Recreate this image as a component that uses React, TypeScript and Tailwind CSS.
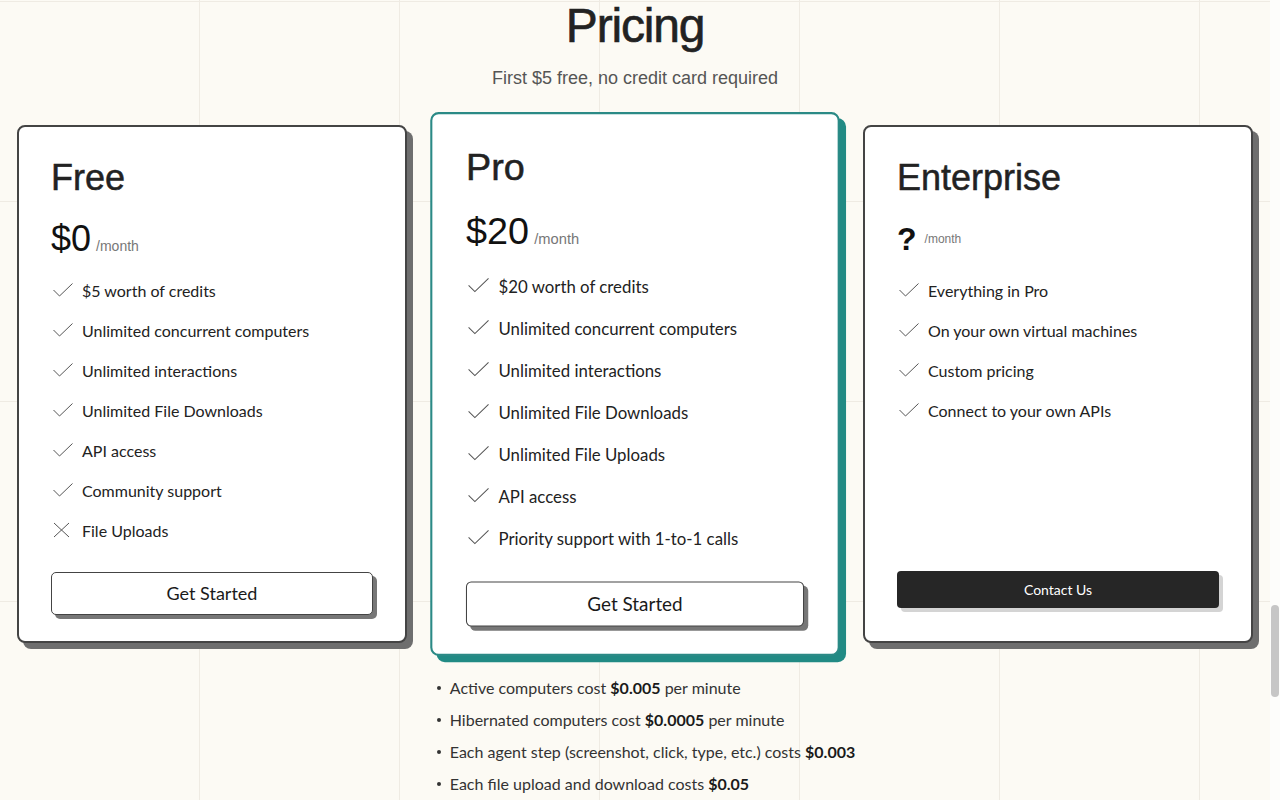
import React from "react";

const HEAD = "font-['Liberation_Sans',Arial,sans-serif]";
const BODY = "font-['Lato','Open_Sans',sans-serif]";

function Check() {
  return (
    <svg width="20" height="14" viewBox="0 0 20 14" className="ml-[2px] mt-[4px] flex-none">
      <polyline points="0.5,7 6.5,13 19.5,0.5" fill="none" stroke="#555" strokeWidth="1" />
    </svg>
  );
}

function Cross() {
  return (
    <svg width="20" height="16" viewBox="0 0 20 16" className="ml-[2px] mt-[3px] flex-none">
      <line x1="1" y1="1" x2="16" y2="15" stroke="#555" strokeWidth="1" />
      <line x1="16" y1="1" x2="1" y2="15" stroke="#555" strokeWidth="1" />
    </svg>
  );
}

type Feature = { text: string; ok: boolean };

function FeatureList({ items }: { items: Feature[] }) {
  return (
    <ul className="mt-5 flex flex-col gap-4">
      {items.map((f) => (
        <li key={f.text} className="flex h-6 items-start gap-[9px]">
          {f.ok ? <Check /> : <Cross />}
          <span className={`${BODY} text-[16px] leading-6 text-[#222]`}>{f.text}</span>
        </li>
      ))}
    </ul>
  );
}

function GetStarted() {
  return (
    <div className="mt-auto pt-[29px]">
      <button
        className={`${BODY} h-[43px] w-full rounded-[5px] border border-[#444] bg-white text-[18px] text-[#1a1a1a] shadow-[4px_4px_0_0_#777]`}
      >
        Get Started
      </button>
    </div>
  );
}

const freeItems: Feature[] = [
  { text: "$5 worth of credits", ok: true },
  { text: "Unlimited concurrent computers", ok: true },
  { text: "Unlimited interactions", ok: true },
  { text: "Unlimited File Downloads", ok: true },
  { text: "API access", ok: true },
  { text: "Community support", ok: true },
  { text: "File Uploads", ok: false },
];

const proItems: Feature[] = [
  { text: "$20 worth of credits", ok: true },
  { text: "Unlimited concurrent computers", ok: true },
  { text: "Unlimited interactions", ok: true },
  { text: "Unlimited File Downloads", ok: true },
  { text: "Unlimited File Uploads", ok: true },
  { text: "API access", ok: true },
  { text: "Priority support with 1-to-1 calls", ok: true },
];

const entItems: Feature[] = [
  { text: "Everything in Pro", ok: true },
  { text: "On your own virtual machines", ok: true },
  { text: "Custom pricing", ok: true },
  { text: "Connect to your own APIs", ok: true },
];

function Title({ children }: { children: React.ReactNode }) {
  return (
    <h2 className={`${HEAD} text-[36px] font-medium leading-[40px] text-[#222] [-webkit-text-stroke:0.5px_#222]`}>
      {children}
    </h2>
  );
}

function Price({ amount }: { amount: string }) {
  return (
    <div className="mt-[21px] flex h-[40px] items-baseline gap-[5px]">
      <span className={`${HEAD} text-[36px] leading-[40px] text-[#111]`}>{amount}</span>
      <span className={`${HEAD} text-[14px] text-[#777]`}>/month</span>
    </div>
  );
}

export default function App() {
  return (
    <div className="flex min-h-screen w-full bg-[#fcfaf4]">
      <main className="relative flex-1 bg-[linear-gradient(to_right,#efebe3_1px,transparent_1px),linear-gradient(to_bottom,#efebe3_1px,transparent_1px)] bg-[size:200px_200px] bg-[position:-1px_1px] pb-10">
        <h1
          className={`${HEAD} pt-[2px] text-center text-[48px] font-medium leading-[48px] tracking-tight text-[#222] [-webkit-text-stroke:0.6px_#222]`}
        >
          Pricing
        </h1>
        <p className={`${HEAD} mt-[14px] text-center text-[18px] leading-[28px] text-[#555]`}>
          First $5 free, no credit card required
        </p>

        <div className="mt-[33px] flex justify-center gap-[33px]">
          {/* Free */}
          <div className="flex w-[390px] flex-col rounded-lg border-2 border-[#444] bg-white px-8 pb-[26px] pt-[31px] shadow-[6px_6px_0_0_#6e6e6e]">
            <Title>Free</Title>
            <Price amount="$0" />
            <FeatureList items={freeItems} />
            <GetStarted />
          </div>

          {/* Pro */}
          <div className="z-10 flex w-[390px] scale-105 flex-col rounded-lg border-2 border-[#2b8a86] bg-white px-8 pb-[26px] pt-[31px] shadow-[6px_6px_0_0_#218a84]">
            <Title>Pro</Title>
            <Price amount="$20" />
            <FeatureList items={proItems} />
            <GetStarted />
          </div>

          {/* Enterprise */}
          <div className="flex w-[390px] flex-col rounded-lg border-2 border-[#444] bg-white px-8 pb-[26px] pt-[31px] shadow-[6px_6px_0_0_#6e6e6e]">
            <Title>Enterprise</Title>
            <div className="mt-[21px] flex h-[40px] items-center gap-[8px]">
              <span className={`${HEAD} text-[32px] font-bold leading-[40px] text-[#111]`}>?</span>
              <span className={`${HEAD} text-[12px] text-[#777]`}>/month</span>
            </div>
            <FeatureList items={entItems} />
            <div className="mt-auto pb-[7px] pt-[29px]">
              <button
                className={`${BODY} h-[37px] w-full rounded-[4px] bg-[#262626] text-[14px] text-white shadow-[4px_4px_0_0_#d4d4d4]`}
              >
                Contact Us
              </button>
            </div>
          </div>
        </div>

        <ul className="mx-auto mt-[33px] flex w-fit flex-col gap-2 pl-[22px]">
          {[
            ["Active computers cost ", "$0.005", " per minute"],
            ["Hibernated computers cost ", "$0.0005", " per minute"],
            ["Each agent step (screenshot, click, type, etc.) costs ", "$0.003", ""],
            ["Each file upload and download costs ", "$0.05", ""],
          ].map(([a, b, c]) => (
            <li key={a} className={`${BODY} flex h-6 items-center gap-[9px] text-[16px] leading-6 text-[#333]`}>
              <span className="h-[4px] w-[4px] flex-none rounded-full bg-[#333]" />
              <span>
                {a}
                <b className="font-bold text-[#1a1a1a]">{b}</b>
                {c}
              </span>
            </li>
          ))}
        </ul>
      </main>
      <div className="w-[10px] flex-none bg-[#fdfdfb]">
        <div className="mx-[1px] mt-[605px] h-[92px] w-[8px] rounded-full bg-[#c6c6c6]" />
      </div>
    </div>
  );
}
